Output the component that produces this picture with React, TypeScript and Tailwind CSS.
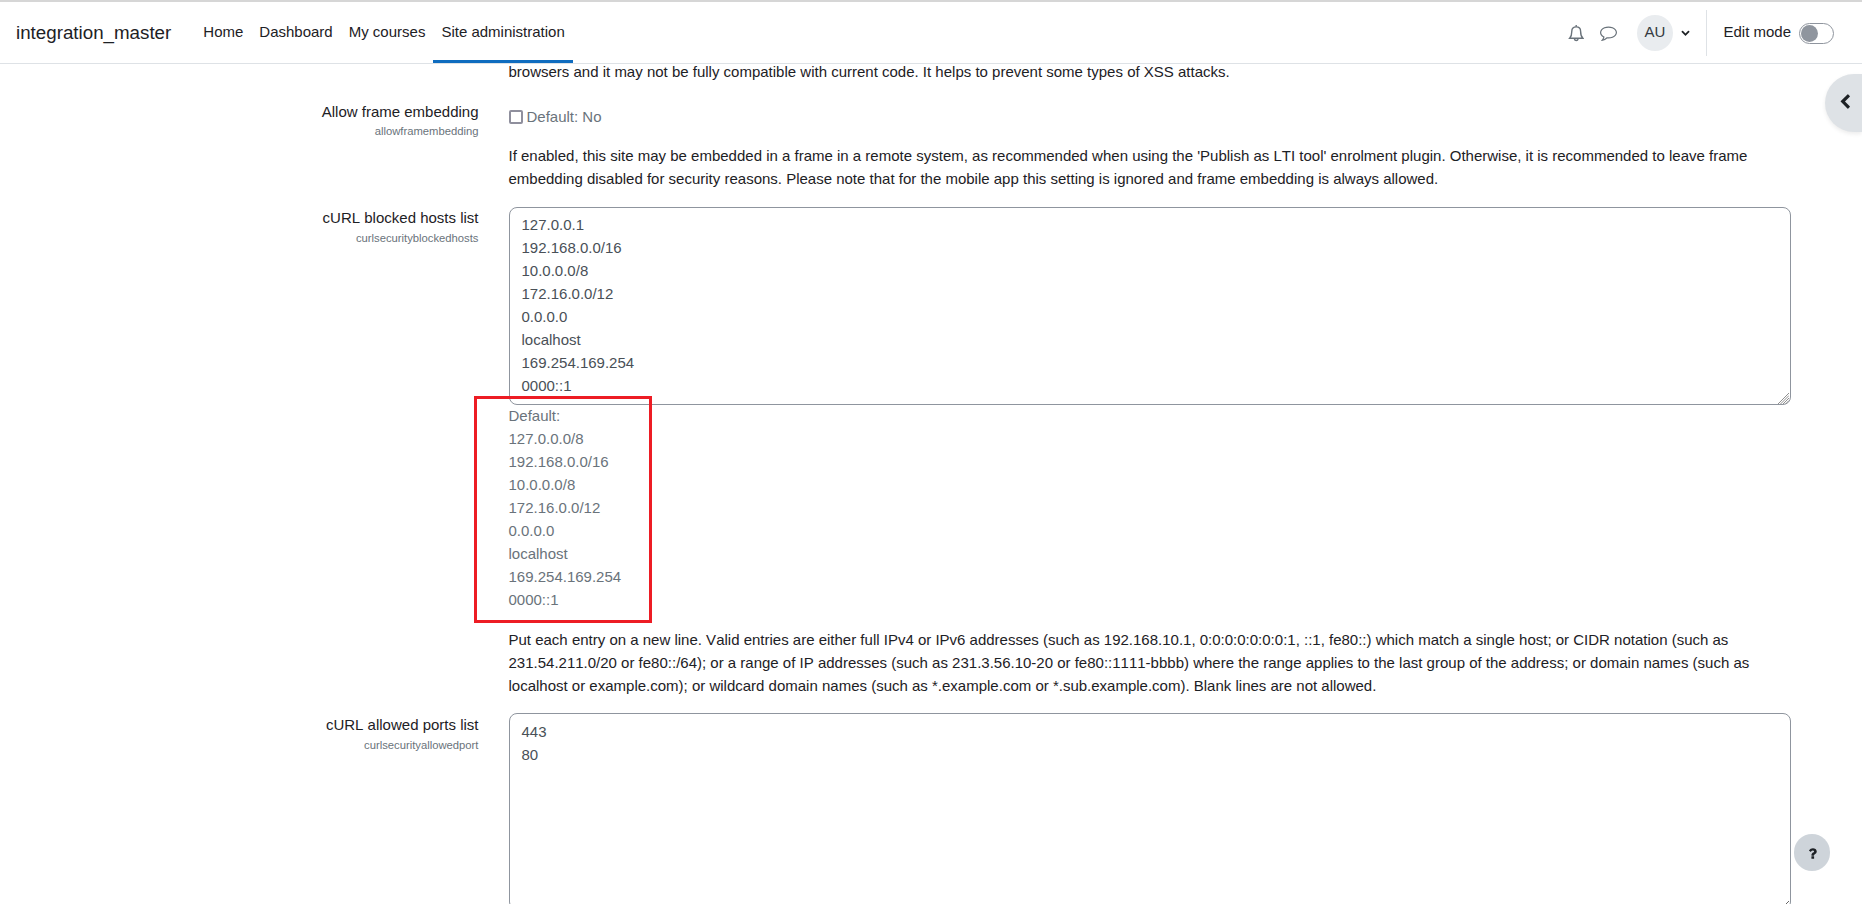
const navItems = ['Home', 'Dashboard', 'My courses', 'Site administration'];

const blockedHosts = [
  '127.0.0.1',
  '192.168.0.0/16',
  '10.0.0.0/8',
  '172.16.0.0/12',
  '0.0.0.0',
  'localhost',
  '169.254.169.254',
  '0000::1',
];

const defaultHosts = ['127.0.0.0/8', ...blockedHosts.slice(1)];

function Icon({ d, className }: { d: string; className: string }) {
  return (
    <svg viewBox="0 0 1792 1792" fill="currentColor" className={className}>
      <path d={d} />
    </svg>
  );
}

const chevronDown =
  'M1683 808l-742 741q-19 19-45 19t-45-19l-742-741q-19-19-19-45.5t19-45.5l166-165q19-19 45-19t45 19l531 531 531-531q19-19 45-19t45 19l166 165q19 19 19 45.5t-19 45.5z';
const chevronLeft =
  'M1427 301l-531 531 531 531q19 19 19 45t-19 45l-166 166q-19 19-45 19t-45-19l-742-742q-19-19-19-45t19-45l742-742q19-19 45-19t45 19l166 166q19 19 19 45t-19 45z';
const question =
  'M1088 1256v240q0 16-12 28t-28 12h-240q-16 0-28-12t-12-28v-240q0-16 12-28t28-12h240q16 0 28 12t12 28zm316-600q0 54-15.5 101t-35 76.5-55 59.5-57.5 43.5-61 35.5q-41 23-68.5 65t-27.5 67q0 17-12 32.5t-28 15.5h-240q-15 0-25.5-18.5t-10.5-37.5v-45q0-83 65-156.5t143-108.5q59-27 84-56t25-76q0-42-46.5-74t-107.5-32q-65 0-108 29-35 25-107 115-13 16-31 16-12 0-25-8l-164-125q-13-10-15.5-25t5.5-28q160-266 464-266 80 0 161 31t146 83 106 127.5 41 158.5z';
const comment =
  'M896 384q-204 0-381.5 69.5t-282 187.5-104.5 255q0 112 71.5 213.5t201.5 175.5l87 50-27 96q-24 91-70 172 152-63 275-171l43-38 57 6q69 8 130 8 204 0 381.5-69.5t282-187.5 104.5-255-104.5-255-282-187.5-381.5-69.5zm896 512q0 174-120 321.5t-326 233-450 85.5q-70 0-145-8-198 175-460 242-49 14-114 22h-5q-15 0-27-10.5t-16-27.5v-1q-3-4-.5-12t2-10 4.5-9.5l6-9 7-8.5 8-9q7-8 31-34.5t34.5-38 31-39.5 32.5-51 27-59 26-76q-157-89-247.5-220t-90.5-281q0-174 120-321.5t326-233 450-85.5 450 85.5 326 233 120 321.5z';

function SettingLabel({ title, name, compact = false }: { title: string; name: string; compact?: boolean }) {
  return (
    <div className="w-[478.5px] shrink-0 text-right">
      <p>{title}</p>
      <p className={`text-[11.25px] text-[#6a737b] ${compact ? 'leading-[17px]' : 'leading-[18px]'}`}>{name}</p>
    </div>
  );
}

export default function App() {
  return (
    <div className="relative flex h-[904px] w-[1862px] flex-col overflow-hidden bg-white font-['Liberation_Sans',sans-serif] text-[15px] leading-[23px] text-[#1d2125] [font-kerning:none]">
      {/* Navbar */}
      <header className="flex h-16 shrink-0 items-stretch border-t-2 border-b border-t-[#d6d6d6] border-b-[#dee2e6] pl-4">
        <span className="mr-6 self-center text-[18.75px]">integration_master</span>
        <nav className="flex">
          {navItems.map((item) => (
            <a
              key={item}
              className={`flex items-center border-b-[3px] px-2 ${
                item === 'Site administration' ? 'border-[#0f6cbf]' : 'border-transparent'
              }`}
            >
              {item}
            </a>
          ))}
        </nav>
        <div className="ml-auto flex items-center pr-7">
          <svg viewBox="0 0 16 18" className="mr-4 h-[18px] w-4 text-[#6a737b]" fill="none" stroke="currentColor" strokeWidth="1.4">
            <path d="M1.7 14.3C3.2 12.6 3.8 10.4 3.8 7.2 3.8 4.6 5.4 2.9 8.2 2.9s4.4 1.7 4.4 4.3c0 3.2.6 5.4 2.3 7.1z" />
            <path d="M8.2 2.7V1M6.4 15a1.9 1.9 0 0 0 3.7 0" />
          </svg>
          <Icon d={comment} className="mr-5 size-[17px] text-[#6a737b]" />
          <span className="flex size-9 items-center justify-center rounded-full bg-[#e9ecef] pr-px pb-[2px] text-[#343a40]">AU</span>
          <Icon d={chevronDown} className="ml-2 size-[9px]" />
          <span className="ml-4 h-[46px] w-px bg-[#dee2e6]" />
          <span className="ml-4 pb-[2px]">Edit mode</span>
          <span className="mt-[2px] ml-2 flex h-[21px] w-[35px] items-center rounded-full border border-[#8f959e] pl-px">
            <span className="size-[17px] rounded-full bg-[#8f959e]" />
          </span>
        </div>
      </header>

      {/* Settings form */}
      <main className="flex flex-col">
        <p className="-mt-1 ml-[508.5px]">
          browsers and it may not be fully compatible with current code. It helps to prevent some types of XSS attacks.
        </p>

        <section className="mt-[17px] flex gap-[30px]">
          <SettingLabel compact title="Allow frame embedding" name="allowframembedding" />
          <div className="w-[1282px] pt-[5px]">
            <label className="flex items-center gap-1 text-[#6a737b]">
              <input
                type="checkbox"
                className="size-[14px] appearance-none rounded-[2px] border-2 border-[#8f8f9d] bg-white"
              />
              Default: No
            </label>
            <p className="mt-4">
              If enabled, this site may be embedded in a frame in a remote system, as recommended when using the 'Publish
              as LTI tool' enrolment plugin. Otherwise, it is recommended to leave frame embedding disabled for security
              reasons. Please note that for the mobile app this setting is ignored and frame embedding is always allowed.
            </p>
          </div>
        </section>

        <section className="mt-4 flex gap-[30px]">
          <SettingLabel title="cURL blocked hosts list" name="curlsecurityblockedhosts" />
          <div className="w-[1282px]">
            <div className="relative -mb-px pt-px">
              <textarea
                readOnly
                rows={8}
                value={blockedHosts.join('\n')}
                className="block h-[198px] w-full resize-none overflow-hidden rounded-lg border border-[#8f959e] px-3 pt-[5px] leading-[23.05px] text-[#495057]"
              />
              <svg viewBox="0 0 11 11" className="absolute right-[2px] bottom-px size-[11px]" stroke="#8f8f8f" strokeWidth="1">
                <path d="M0 11L11 0M2.5 11L11 2.5M5 11L11 5M7.5 11L11 7.5" />
              </svg>
            </div>
            <div className="text-[#6a737b]">
              <p>Default:</p>
              {defaultHosts.map((host) => (
                <p key={host}>{host}</p>
              ))}
            </div>
            <p className="mt-[17px]">
              Put each entry on a new line. Valid entries are either full IPv4 or IPv6 addresses (such as 192.168.10.1,
              0:0:0:0:0:0:0:1, ::1, fe80::) which match a single host; or CIDR notation (such as 231.54.211.0/20 or
              fe80::/64); or a range of IP addresses (such as 231.3.56.10-20 or fe80::1111-bbbb) where the range applies to
              the last group of the address; or domain names (such as localhost or example.com); or wildcard domain names
              (such as *.example.com or *.sub.example.com). Blank lines are not allowed.
            </p>
          </div>
        </section>

        <section className="mt-4 flex gap-[30px]">
          <SettingLabel title="cURL allowed ports list" name="curlsecurityallowedport" />
          <div className="w-[1282px]">
            <textarea
              readOnly
              rows={8}
              value={'443\n80'}
              className="block h-[197px] w-full overflow-hidden rounded-lg border border-[#8f959e] px-3 py-1.5 text-[#495057]"
            />
          </div>
        </section>
      </main>

      {/* Highlight around the default values */}
      <div className="absolute top-[396px] left-[474px] h-[227px] w-[178px] border-3 border-[#ed1c24]" />

      {/* Block drawer toggle */}
      <button className="absolute top-[74px] right-0 flex h-[58px] w-[37px] items-center rounded-l-full bg-[#dee2e6] pb-[3px] pl-3 shadow-[0_2px_4px_rgba(0,0,0,0.08)]">
        <Icon d={chevronLeft} className="size-4" />
      </button>

      {/* Footer help */}
      <button className="absolute top-[834px] left-[1794px] flex h-[37px] w-9 items-center justify-center rounded-full bg-[#ced4da] pt-[2px]">
        <Icon d={question} className="size-[15px]" />
      </button>
    </div>
  );
}
